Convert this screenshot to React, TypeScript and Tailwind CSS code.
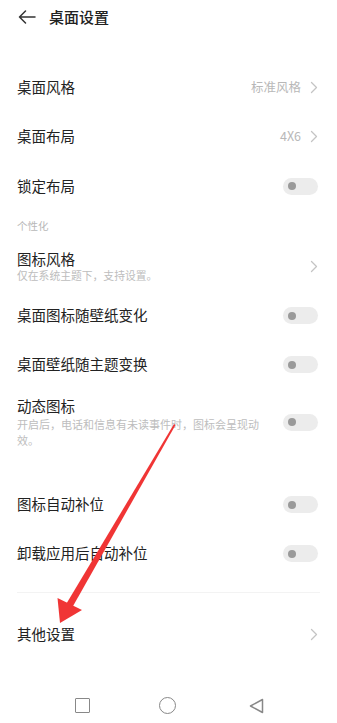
import React from "react";

const font = { fontFamily: '"Noto Sans CJK SC", "Noto Sans", sans-serif' };

function Chevron() {
  return (
    <svg width="8" height="13" viewBox="0 0 8 13" className="shrink-0">
      <path d="M1.5 1.5 L6.5 6.5 L1.5 11.5" fill="none" stroke="#c4c4c4" strokeWidth="1.3" strokeLinecap="round" strokeLinejoin="round" />
    </svg>
  );
}

function Toggle() {
  return (
    <div className="w-[35px] h-[17px] rounded-full bg-[#ececec] flex items-center pl-[5px] shrink-0">
      <div className="w-[8px] h-[8px] rounded-full bg-[#9a9a9a]" />
    </div>
  );
}

function Row({ label, h, right }: { label: string; h: string; right: React.ReactNode }) {
  return (
    <div className={`flex items-center justify-between pl-[17px] pr-[19px] ${h}`}>
      <span className="text-[14.5px] text-[#222] leading-none">{label}</span>
      {right}
    </div>
  );
}

export default function App() {
  return (
    <div className="w-[337px] h-[723px] bg-white relative overflow-hidden" style={font}>
      {/* header */}
      <div className="h-[33px] flex items-center pl-[18px]">
        <svg width="18" height="14" viewBox="0 0 18 14">
          <path d="M17 7 H1.5 M7.5 1 L1.5 7 L7.5 13" fill="none" stroke="#333" strokeWidth="1.5" strokeLinecap="round" strokeLinejoin="round" />
        </svg>
        <span className="ml-[13px] text-[15px] font-medium text-[#222] leading-none">桌面设置</span>
      </div>
      <div className="h-[29px]" />

      <Row label="桌面风格" h="h-[50px]" right={
        <div className="flex items-center gap-[9px]">
          <span className="text-[12.5px] text-[#b8b8b8]">标准风格</span>
          <Chevron />
        </div>
      } />
      <Row label="桌面布局" h="h-[49px]" right={
        <div className="flex items-center gap-[9px]">
          <span className="text-[12.5px] text-[#b8b8b8]">4X6</span>
          <Chevron />
        </div>
      } />
      <Row label="锁定布局" h="h-[50px]" right={<Toggle />} />

      <div className="h-[30px] flex items-center pl-[17px]">
        <span className="text-[10.5px] text-[#b8b8b8] leading-none">个性化</span>
      </div>

      <div className="h-[50px] flex items-center justify-between pl-[17px] pr-[19px]">
        <div className="flex flex-col">
          <span className="text-[14.5px] text-[#222] leading-[18px]">图标风格</span>
          <span className="text-[10.8px] text-[#bdbdbd] leading-[15px]">仅在系统主题下，支持设置。</span>
        </div>
        <Chevron />
      </div>

      <Row label="桌面图标随壁纸变化" h="h-[49px]" right={<Toggle />} />
      <Row label="桌面壁纸随主题变换" h="h-[49px]" right={<Toggle />} />

      <div className="h-[66px] flex items-center justify-between pl-[17px] pr-[19px]">
        <div className="flex flex-col w-[252px]">
          <span className="text-[14.5px] text-[#222] leading-[18px]">动态图标</span>
          <span className="text-[11px] text-[#bdbdbd] leading-[16px] mt-[1px]">开启后，电话和信息有未读事件时，图标会呈现动效。</span>
        </div>
        <Toggle />
      </div>

      <div className="h-[25px]" />
      <Row label="图标自动补位" h="h-[49px]" right={<Toggle />} />
      <Row label="卸载应用后自动补位" h="h-[49px]" right={<Toggle />} />

      <div className="h-[14px]" />
      <div className="mx-[17px] h-px bg-[#f3f3f3]" />
      <div className="h-[17px]" />

      <Row label="其他设置" h="h-[49px]" right={<Chevron />} />

      {/* nav bar */}
      <div className="absolute left-0 right-0 top-[693px] h-[25px] flex items-center">
        <div className="w-[337px] flex items-center">
          <div className="w-[15px] h-[15px] border-[1.5px] border-[#888] rounded-[1px] ml-[75px]" />
          <div className="w-[17px] h-[17px] border-[1.5px] border-[#888] rounded-full ml-[69px]" />
          <svg width="15" height="16" viewBox="0 0 15 16" className="ml-[73px]">
            <path d="M13.5 1.5 L1.5 8 L13.5 14.5 Z" fill="none" stroke="#888" strokeWidth="1.5" strokeLinejoin="round" />
          </svg>
        </div>
      </div>

      {/* red annotation arrow */}
      <svg className="absolute left-0 top-0 pointer-events-none" width="337" height="723" viewBox="0 0 337 723">
        <polygon points="174,424 175.5,425 72.5,607 66.5,603.5" fill="#f03535" />
        <polygon points="60,623 57.5,598 82,610" fill="#f03535" />
      </svg>
    </div>
  );
}
